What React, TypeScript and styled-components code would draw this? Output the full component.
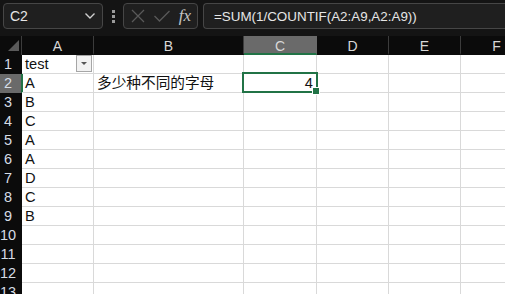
import { FC } from "react";
import { createGlobalStyle, styled } from "styled-components";

const colWidths = [22, 72, 150, 73, 72, 72, 72];
const colNames = ["A", "B", "C", "D", "E", "F"];
const rowHeight = 19;
const green = "#217346";

const rows: Record<number, string[]> = {
  1: ["test", "", "", "", "", ""],
  2: ["A", "多少种不同的字母", "4", "", "", ""],
  3: ["B"],
  4: ["C"],
  5: ["A"],
  6: ["A"],
  7: ["D"],
  8: ["C"],
  9: ["B"],
};

// column index counts from A = 0
const selected = { row: 2, col: 2 };

const GlobalStyle = createGlobalStyle`
  html, body {
    margin: 0;
    background: #fff;
    overflow: hidden;
  }
`;

const Page = styled.div`
  width: 505px;
  height: 294px;
  overflow: hidden;
  font-family: "Liberation Sans", "Noto Sans CJK SC", sans-serif;
`;

const Toolbar = styled.div`
  height: 36px;
  box-sizing: border-box;
  padding: 3px 0 0 3px;
  background: #141414;
  display: flex;
  align-items: flex-start;
`;

const Field = styled.div`
  height: 26px;
  box-sizing: border-box;
  border: 1px solid #464646;
  border-radius: 4px;
  background: #1f1f1f;
  display: flex;
  align-items: center;
  color: #e6e6e6;
  font-size: 14px;
`;

const NameBox = styled(Field)`
  width: 100px;
  padding: 0 6px 0 6px;
  justify-content: space-between;
`;

const Dots = styled.div`
  width: 20px;
  height: 26px;
  display: flex;
  flex-direction: column;
  align-items: center;
  justify-content: center;
  gap: 2px;
  span {
    width: 3px;
    height: 3px;
    background: #9a9a9a;
  }
`;

const FxBox = styled(Field)`
  width: 75px;
  padding: 0 4px 0 6px;
  justify-content: space-between;
  i {
    font-family: "Liberation Serif", "DejaVu Serif", serif;
    font-size: 17px;
    color: #c4c4c4;
    padding-right: 2px;
  }
`;

const FormulaBox = styled(Field)`
  flex: 1;
  margin-left: 5px;
  margin-right: -10px;
  padding-left: 10px;
  border-right: none;
  font-size: 13.4px;
`;

const Sheet = styled.div`
  position: relative;
  display: grid;
  grid-template-columns: ${colWidths.map((w) => `${w}px`).join(" ")};
  grid-auto-rows: ${rowHeight}px;
`;

const Corner = styled.div`
  background: #0b0b0b;
  position: relative;
  border-right: 1px solid #3c3c3c;
  box-sizing: border-box;
  &::after {
    content: "";
    position: absolute;
    right: 2px;
    bottom: 4px;
    width: 0;
    height: 0;
    border-left: 11px solid transparent;
    border-bottom: 11px solid #5a5a5a;
  }
`;

const ColHeader = styled.div<{ $active?: boolean }>`
  box-sizing: border-box;
  background: ${({ $active }) => ($active ? "#6a6a6a" : "#0b0b0b")};
  border-right: 1px solid ${({ $active }) => ($active ? "#6a6a6a" : "#3c3c3c")};
  border-bottom: 2px solid ${({ $active }) => ($active ? green : "#0b0b0b")};
  color: #d8d8d8;
  font-size: 14px;
  text-align: center;
  line-height: 18px;
  padding-top: 1px;
`;

const RowHeader = styled.div<{ $active?: boolean }>`
  box-sizing: border-box;
  background: ${({ $active }) => ($active ? "#6a6a6a" : "#0b0b0b")};
  border-right: 1px solid ${({ $active }) => ($active ? green : "#0b0b0b")};
  box-shadow: ${({ $active }) => ($active ? `1px 0 0 ${green}` : "none")};
  color: #d6dde6;
  font-size: 14.5px;
  padding-right: 5px;
  text-align: center;
  line-height: 19px;
`;

const Cell = styled.div<{ $align?: "left" | "right" }>`
  position: relative;
  box-sizing: border-box;
  border-right: 1px solid #d9d9d9;
  border-bottom: 1px solid #d9d9d9;
  color: #111;
  font-size: 14.67px;
  line-height: 19px;
  padding: 0 3px 0 3px;
  text-align: ${({ $align }) => $align ?? "left"};
  white-space: nowrap;
`;

const Filter = styled.div`
  position: absolute;
  top: 0;
  right: 1px;
  width: 16px;
  height: 17px;
  box-sizing: border-box;
  border: 1px solid #a6a6a6;
  background: #f2f2f2;
  &::after {
    content: "";
    position: absolute;
    left: 4px;
    top: 6px;
    border-left: 3px solid transparent;
    border-right: 3px solid transparent;
    border-top: 3px solid #555;
  }
`;

const Selection = styled.div`
  position: absolute;
  box-sizing: border-box;
  border: 2px solid ${green};
  pointer-events: none;
`;

const Handle = styled.div`
  position: absolute;
  right: -4px;
  bottom: -4px;
  width: 6px;
  height: 6px;
  background: ${green};
  border: 1px solid #fff;
`;

const CrossIcon: FC = () => (
  <svg width="16" height="16" viewBox="0 0 16 16">
    <path d="M2 2 L14 14 M14 2 L2 14" stroke="#595959" strokeWidth="1.3" fill="none" />
  </svg>
);

const CheckIcon: FC = () => (
  <svg width="18" height="16" viewBox="0 0 18 16">
    <path d="M1.5 8 L6.5 13 L16.5 3" stroke="#595959" strokeWidth="1.3" fill="none" />
  </svg>
);

const Chevron: FC = () => (
  <svg width="12" height="8" viewBox="0 0 12 8">
    <path d="M1.5 1.5 L6 6 L10.5 1.5" stroke="#cfcfcf" strokeWidth="1.4" fill="none" />
  </svg>
);

const App: FC = () => {
  const rowCount = 13;
  const selLeft = colWidths.slice(0, selected.col + 1).reduce((a, b) => a + b, 0) - 2;
  const selTop = selected.row * rowHeight - 2;

  return (
    <Page>
      <GlobalStyle />
      <Toolbar>
        <NameBox>
          C2
          <Chevron />
        </NameBox>
        <Dots>
          <span />
          <span />
          <span />
        </Dots>
        <FxBox>
          <CrossIcon />
          <CheckIcon />
          <i>fx</i>
        </FxBox>
        <FormulaBox>=SUM(1/COUNTIF(A2:A9,A2:A9))</FormulaBox>
      </Toolbar>
      <Sheet>
        <Corner />
        {colNames.map((c, i) => (
          <ColHeader key={c} $active={i === selected.col}>
            {c}
          </ColHeader>
        ))}
        {Array.from({ length: rowCount }, (_, r) => {
          const row = r + 1;
          const values = rows[row] ?? [];
          return [
            <RowHeader key={`h${row}`} $active={row === selected.row}>
              {row}
            </RowHeader>,
            ...colNames.map((c, i) => {
              const v = values[i] ?? "";
              const numeric = v !== "" && !isNaN(Number(v));
              return (
                <Cell key={`${c}${row}`} $align={numeric ? "right" : "left"}>
                  {v}
                  {row === 1 && i === 0 && <Filter />}
                </Cell>
              );
            }),
          ];
        })}
        <Selection
          style={{
            left: selLeft,
            top: selTop,
            width: colWidths[selected.col + 1] + 3,
            height: rowHeight + 2,
          }}
        >
          <Handle />
        </Selection>
      </Sheet>
    </Page>
  );
};

export default App;
